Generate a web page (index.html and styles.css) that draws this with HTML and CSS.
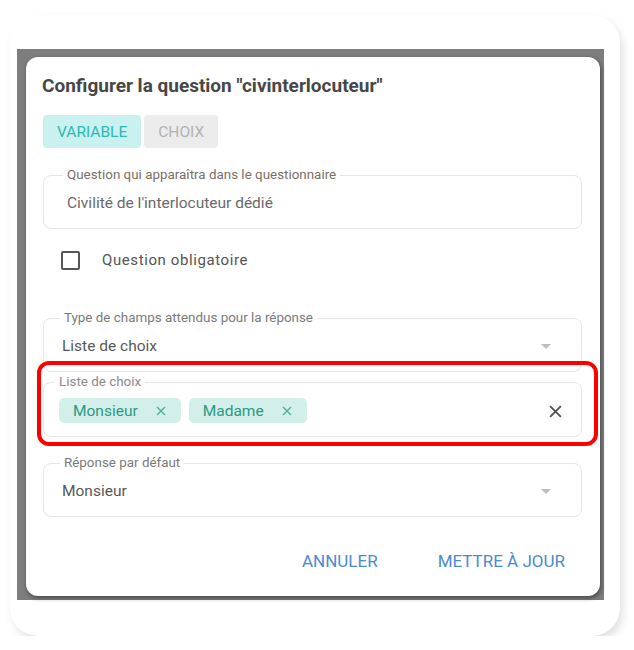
FILE: index.html
```html
<!DOCTYPE html>
<html lang="fr">
<head>
    <meta charset="UTF-8">
    <meta name="viewport" content="width=device-width, initial-scale=1.0">
    <title>Configurer la question</title>
    <link rel="stylesheet" href="styles.css">
</head>
<body>
    <div class="frame">
        <div class="backdrop">
            <div class="dialog">
                <h2 class="title">Configurer la question "civinterlocuteur"</h2>
                <div class="tabs">
                    <button class="tab active">Variable</button>
                    <button class="tab">Choix</button>
                </div>

                <div class="fields">
                    <fieldset class="field first">
                        <legend>Question qui apparaîtra dans le questionnaire</legend>
                        <div class="value small">Civilité de l'interlocuteur dédié</div>
                    </fieldset>

                    <label class="check-row">
                        <span class="checkbox"></span>
                        <span class="check-label">Question obligatoire</span>
                    </label>

                    <fieldset class="field select">
                        <legend>Type de champs attendus pour la réponse</legend>
                        <div class="value">Liste de choix</div>
                        <span class="caret"></span>
                    </fieldset>

                    <fieldset class="field chips-field">
                        <legend>Liste de choix</legend>
                        <div class="chips">
                            <span class="chip">Monsieur
                                <svg class="chip-x" viewBox="0 0 10 10"><path d="M1 1L9 9M9 1L1 9"/></svg>
                            </span>
                            <span class="chip">Madame
                                <svg class="chip-x" viewBox="0 0 10 10"><path d="M1 1L9 9M9 1L1 9"/></svg>
                            </span>
                        </div>
                        <svg class="clear-x" viewBox="0 0 12 12"><path d="M1 1L11 11M11 1L1 11"/></svg>
                    </fieldset>

                    <fieldset class="field select last">
                        <legend>Réponse par défaut</legend>
                        <div class="value">Monsieur</div>
                        <span class="caret"></span>
                    </fieldset>
                </div>

                <div class="actions">
                    <button class="action">Annuler</button>
                    <button class="action">Mettre à jour</button>
                </div>

                <!-- red highlight drawn on top of the screenshot -->
                <div class="highlight"></div>
            </div>
        </div>
    </div>
</body>
</html>
```

FILE: styles.css
```css
body {
    margin: 0;
    padding: 15px 0 0 10px;
    background-color: white;
    font-family: Roboto, "Liberation Sans", Arial, sans-serif;
}
.frame {
    width: 610px;
    height: 621px;
    box-sizing: border-box;
    padding: 34px 16px 0 7px;
    border-radius: 28px;
    background-color: white;
    box-shadow: 3px 5px 9px rgba(0, 0, 0, 0.12);
}
.backdrop {
    width: 587px;
    height: 551px;
    box-sizing: border-box;
    padding: 8px 4px 4px 9px;
    background-color: #7e7e7e;
}
.dialog {
    position: relative;
    height: 539px;
    background-color: white;
    border-radius: 12px;
    box-shadow: 1px 2px 5px rgba(0, 0, 0, 0.45);
}
.title {
    margin: 0;
    padding: 17px 0 0 16px;
    font-size: 19px;
    line-height: 24px;
    font-weight: 700;
    color: #474747;
}
.tabs {
    display: flex;
    gap: 3px;
    margin: 17px 0 0 17px;
}
.tab {
    height: 33px;
    padding: 0 14px;
    border: none;
    border-radius: 4px;
    font-family: inherit;
    font-size: 15.5px;
    text-transform: uppercase;
    background-color: #ececec;
    color: #b2b2b2;
}
.tab.active {
    background-color: #c9f1f0;
    color: #2fb7b2;
}
.fields {
    display: flex;
    flex-direction: column;
    padding: 0 18px 0 17px;
    margin-top: 20px;
}
.field {
    position: relative;
    margin: 0;
    padding: 9px 40px 13px 16px;
    border: 1px solid #e6e6e6;
    border-radius: 8px;
    min-inline-size: 0;
}
.field legend {
    margin-left: 0;
    padding: 0 4px;
    font-size: 13.4px;
    line-height: 14px;
    color: #7a7a7a;
}
.field.first legend {
    margin-left: 3px;
    color: #7b6f66;
}
.value {
    padding-left: 2px;
    font-size: 15.5px;
    line-height: 24px;
    color: #595959;
}
.value.small {
    padding-left: 7px;
    color: #6a6a6a;
}
.caret {
    position: absolute;
    right: 30px;
    top: 19px;
    border-left: 5px solid transparent;
    border-right: 5px solid transparent;
    border-top: 5px solid #bdbdbd;
}
.check-row {
    display: flex;
    align-items: center;
    height: 40px;
    margin: 11px 0 31px 18px;
}
.checkbox {
    width: 15px;
    height: 15px;
    border: 2px solid #555;
    border-radius: 2px;
}
.check-label {
    margin-left: 22px;
    font-size: 15px;
    letter-spacing: 0.6px;
    color: #555;
}
.chips-field {
    margin-top: 3px;
    padding-left: 15px;
}
.chips-field legend {
    margin-left: -4px;
    color: #8a8a8a;
}
.chips {
    display: flex;
    gap: 8px;
}
.chip {
    display: flex;
    align-items: center;
    gap: 18px;
    height: 25px;
    padding: 0 15px 0 14px;
    border-radius: 5px;
    background-color: #d3efe9;
    color: #2a9a86;
    font-size: 15.5px;
}
.chip-x {
    width: 10px;
    height: 10px;
    fill: none;
    stroke: #4fae9d;
    stroke-width: 1.4;
}
.clear-x {
    position: absolute;
    right: 19px;
    top: 16px;
    width: 13px;
    height: 13px;
    fill: none;
    stroke: #555;
    stroke-width: 1.8;
}
.last {
    margin-top: 19px;
}
.actions {
    display: flex;
    justify-content: flex-end;
    gap: 44px;
    margin-top: 26px;
    padding-right: 27px;
}
.action {
    height: 36px;
    padding: 0 8px;
    border: none;
    background: none;
    font-family: inherit;
    font-size: 17px;
    text-transform: uppercase;
    color: #4b8ad2;
}
.highlight {
    position: absolute;
    left: 11px;
    top: 304px;
    width: 553px;
    height: 77px;
    border: 4px solid #ff0000;
    border-radius: 12px;
}
```
